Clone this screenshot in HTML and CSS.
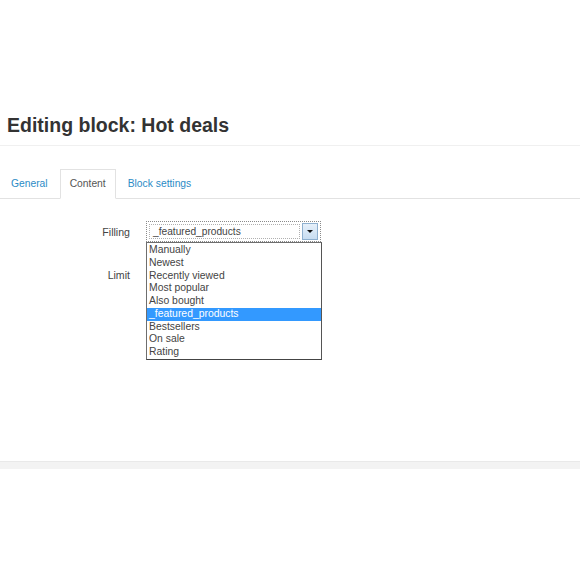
FILE: index.html
```html
<!DOCTYPE html>
<html lang="en">
<head>
<meta charset="utf-8">
<title>Editing block: Hot deals</title>
<link rel="stylesheet" href="styles.css">
</head>
<body>
<div class="page">
  <header class="page-header">
    <h1 class="page-title">Editing block: Hot deals</h1>
  </header>
  <ul class="tabs">
    <li class="tab"><a class="tab-link">General</a></li>
    <li class="tab"><a class="tab-link active">Content</a></li>
    <li class="tab"><a class="tab-link">Block settings</a></li>
  </ul>
  <div class="tab-pane">
    <div class="form-row">
      <label class="form-label">Filling</label>
      <div class="select">
        <span class="select-value">_featured_products</span>
        <span class="select-arrow"><span class="arrow-tri"></span></span>
        <ul class="dropdown">
          <li class="option">Manually</li>
          <li class="option">Newest</li>
          <li class="option">Recently viewed</li>
          <li class="option">Most popular</li>
          <li class="option">Also bought</li>
          <li class="option selected">_featured_products</li>
          <li class="option">Bestsellers</li>
          <li class="option">On sale</li>
          <li class="option">Rating</li>
        </ul>
      </div>
    </div>
    <div class="form-row">
      <label class="form-label">Limit</label>
      <input class="text-input" type="text">
    </div>
  </div>
  <div class="footer-band"></div>
</div>
</body>
</html>
```
FILE: styles.css
```css
* { box-sizing: border-box; }
html, body { margin: 0; padding: 0; background: #fff; }
body { font-family: "Liberation Sans", Arial, sans-serif; color: #333; }

.page-header {
  margin-top: 113px;
  padding: 0 0 8px 7px;
  border-bottom: 1px solid #f0f0f0;
}
.page-title {
  margin: 0;
  font-size: 19.5px;
  line-height: 24px;
  font-weight: bold;
  color: #333;
}

.tabs {
  list-style: none;
  margin: 23px 0 0 0;
  padding: 0 0 0 1px;
  display: flex;
  border-bottom: 1px solid #e2e2e2;
}
.tab { margin: 0 2px -1px 0; }
.tab-link {
  display: block;
  font-size: 10.3px;
  line-height: 28px;
  padding: 0 9px;
  border: 1px solid transparent;
  color: #2b8bc6;
}
.tab-link.active {
  color: #555;
  background: #fff;
  border-color: #e2e2e2;
  border-bottom-color: #fff;
}

.tab-pane {
  height: 262px;
  padding-top: 22px;
  display: flex;
  flex-direction: column;
  gap: 23px;
}
.form-row {
  display: grid;
  grid-template-columns: 130px auto;
  column-gap: 16px;
  align-items: center;
  justify-items: start;
}
.form-label {
  justify-self: end;
  font-size: 10.6px;
  color: #444;
}

.select {
  position: relative;
  width: 175px;
  height: 21px;
  border: 1px dotted #8a8a8a;
  padding: 2px;
  display: flex;
  align-items: center;
  background: #fff;
}
.select-value {
  flex: 1;
  height: 15px;
  border: 1px dotted #b0b0b0;
  padding: 0 3px;
  font-size: 10.2px;
  line-height: 13px;
  color: #444;
}
.select-arrow {
  margin-left: 2px;
  width: 16px;
  height: 17px;
  background: linear-gradient(#e6f0fa, #c8ddf1);
  border: 1px solid #8fb0cf;
  display: flex;
  align-items: center;
  justify-content: center;
}
.arrow-tri {
  width: 0;
  height: 0;
  border-left: 3px solid transparent;
  border-right: 3px solid transparent;
  border-top: 3px solid #111;
}

.dropdown {
  position: absolute;
  top: 20px;
  left: -1px;
  width: 176px;
  margin: 0;
  padding: 1px 0 0 0;
  list-style: none;
  background: #fff;
  border: 1px solid #6e6e6e;
  border-right-color: #555;
  border-bottom-color: #444;
  z-index: 2;
}
.option {
  font-size: 10.4px;
  line-height: 12.75px;
  padding: 0 2px;
  color: #444;
  white-space: nowrap;
}
.option.selected {
  background: #3399ff;
  color: #fff;
}

.text-input {
  width: 60px;
  height: 20px;
  border: 1px solid #ccc;
  font: 10px "Liberation Sans", Arial, sans-serif;
}

.footer-band {
  height: 8px;
  background: #f3f3f3;
  border-top: 1px solid #e9e9e9;
}
```
